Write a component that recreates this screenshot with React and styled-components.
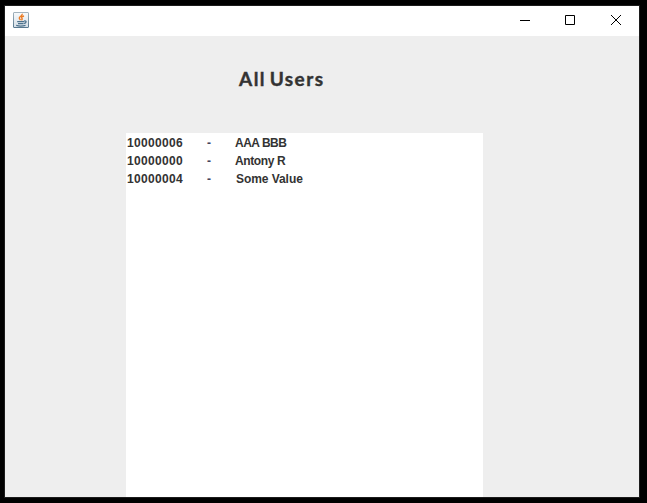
import React from "react";
import styled, { createGlobalStyle } from "styled-components";

const GlobalStyle = createGlobalStyle`
  body { margin: 0; background: #000; overflow: hidden; }
`;

const Desktop = styled.div`
  box-sizing: border-box;
  width: 647px;
  height: 503px;
  padding: 5px 7px 5px 4px;
  background: #000;
`;

const Window = styled.main`
  box-sizing: border-box;
  display: flex;
  flex-direction: column;
  width: 636px;
  height: 493px;
  border: 1px solid #1c1c1c;
  background: #eee;
`;

const TitleBar = styled.header`
  display: flex;
  flex: none;
  justify-content: space-between;
  height: 30px;
  padding-left: 8px;
  background: #fff;
`;

const AppIcon = styled.svg`
  width: 16px;
  height: 16px;
  margin-top: 6px;
`;

const Controls = styled.div`
  display: flex;
`;

const ControlButton = styled.button`
  display: flex;
  align-items: flex-start;
  justify-content: center;
  width: ${({ $width }) => $width}px;
  height: 30px;
  padding: 9px 0 0;
  border: 0;
  background: transparent;
`;

const Glyph = styled.svg`
  width: 11px;
  height: 11px;
  fill: none;
  stroke: #000;
`;

const Content = styled.section`
  display: flex;
  flex: 1;
  flex-direction: column;
  min-height: 0;
`;

const Heading = styled.h1`
  height: 97px;
  margin: 0;
  padding: 29px 0 0 234px;
  box-sizing: border-box;
  color: #333;
  font: 700 19px/28px Lato, sans-serif;
  letter-spacing: 1.45px;
  word-spacing: -2.4px;
  white-space: nowrap;
  -webkit-text-stroke: 0.4px #333;
`;

const UserList = styled.ul`
  flex: 1;
  width: 357px;
  margin: 0 0 0 121px;
  padding: 1px 0 0;
  box-sizing: border-box;
  background: #fff;
  list-style: none;
`;

const UserRow = styled.li`
  display: grid;
  grid-template-columns: 80px ${({ $nameOffset }) => 28 + $nameOffset}px 1fr;
  height: 18px;
  padding-left: 1px;
  color: #333;
  font: 700 12px/18px "Liberation Sans", Arial, sans-serif;
  white-space: nowrap;
`;

const UserId = styled.span`
  letter-spacing: 0.33px;
`;

const Separator = styled.span`
  color: #44445c;
`;

const UserName = styled.span`
  letter-spacing: ${({ $tracking }) => $tracking}px;
`;

const users = [
  { id: "10000006", name: "AAA BBB", offset: 0, tracking: -0.5 },
  { id: "10000000", name: "Antony R", offset: 0, tracking: -0.38 },
  { id: "10000004", name: "Some Value", offset: 1, tracking: -0.06 },
];

function JavaIcon() {
  return (
    <AppIcon viewBox="0 0 16 16" aria-hidden="true">
      <defs>
        <linearGradient id="iconFace" x1="0" y1="0" x2="0" y2="1">
          <stop offset="0" stopColor="#f8fafb" />
          <stop offset="1" stopColor="#d6dfe7" />
        </linearGradient>
        <linearGradient id="iconEdge" x1="0" y1="0" x2="0" y2="1">
          <stop offset="0" stopColor="#a3b3bd" />
          <stop offset="1" stopColor="#58788f" />
        </linearGradient>
      </defs>
      <rect x=".5" y=".5" width="15" height="15" rx=".5" fill="url(#iconFace)" stroke="url(#iconEdge)" />
      <path d="M9.2 1.8C9.9 3.8 6 4.5 6.3 6.1c.1.8.7 1.3 1.2 2M11 4C8.4 4.7 8.1 5.3 8.9 6.3c.6.7.2 1.4-.5 1.9" fill="none" stroke="#ec7c25" strokeWidth="1.4" />
      <path d="M4.2 9.5h6.8M5 11.5h5.6M11 9.1c3.1-.8 2.4 2 0 2.3M3.2 13.4c2.2.6 7 .6 9.3-.1" fill="none" stroke="#4c718c" strokeWidth="1.25" />
    </AppIcon>
  );
}

export default function App() {
  return (
    <>
      <GlobalStyle />
      <Desktop>
        <Window>
          <TitleBar>
            <JavaIcon />
            <Controls>
              <ControlButton $width={43} aria-label="Minimize">
                <Glyph viewBox="0 0 11 11"><path d="M0 5.5h10" /></Glyph>
              </ControlButton>
              <ControlButton $width={47} aria-label="Maximize">
                <Glyph viewBox="0 0 11 11"><path d="M.5.5h9v9h-9z" /></Glyph>
              </ControlButton>
              <ControlButton $width={45} aria-label="Close">
                <Glyph viewBox="0 0 11 11"><path d="m0 0 10 10m0-10-10 10" /></Glyph>
              </ControlButton>
            </Controls>
          </TitleBar>
          <Content>
            <Heading>All Users</Heading>
            <UserList>
              {users.map((user) => (
                <UserRow key={user.id} $nameOffset={user.offset}>
                  <UserId>{user.id}</UserId>
                  <Separator>-</Separator>
                  <UserName $tracking={user.tracking}>{user.name}</UserName>
                </UserRow>
              ))}
            </UserList>
          </Content>
        </Window>
      </Desktop>
    </>
  );
}
